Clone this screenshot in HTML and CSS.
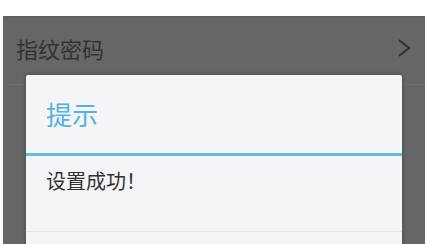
FILE: index.html
```html
<!DOCTYPE html>
<html lang="zh-CN">
<head>
    <meta charset="UTF-8">
    <meta name="viewport" content="width=device-width, initial-scale=1.0">
    <title>指纹密码</title>
    <link rel="stylesheet" href="styles.css">
</head>
<body>
    <div class="screen">
        <div class="list-row">
            <span class="row-label">指纹密码</span>
            <svg class="chevron" width="14" height="18" viewBox="0 0 14 18">
                <polyline points="2,1 12,9 2,17" fill="none" stroke="#333" stroke-width="2.2"/>
            </svg>
        </div>
        <div class="dialog">
            <div class="dialog-title">提示</div>
            <div class="dialog-body">设置成功！</div>
            <div class="dialog-buttons"></div>
        </div>
    </div>
</body>
</html>
```

FILE: styles.css
```css
body {
    margin: 0;
    padding: 0;
    background: #fff;
    font-family: 'Noto Sans CJK SC', 'Noto Sans', sans-serif;
    overflow: hidden;
}
.screen {
    position: relative;
    margin-top: 16px;
    margin-left: 3px;
    height: 228px;
    background: #666;
    border-top: 2px solid #616161;
    box-sizing: border-box;
}
.list-row {
    display: flex;
    align-items: center;
    justify-content: space-between;
    height: 60px;
    padding: 0 14px 6px 13px;
    border-bottom: 1px solid #6c6c6c;
}
.row-label {
    font-size: 22px;
    color: #333;
}
.chevron {
    display: block;
}
.dialog {
    position: absolute;
    left: 23px;
    top: 57px;
    width: 376px;
    height: 180px;
    background: #f5f5f7;
    border-radius: 2px;
    box-shadow: 0 0 4px rgba(0, 0, 0, 0.35);
}
.dialog-title {
    height: 77px;
    display: flex;
    align-items: center;
    padding: 0 0 1px 20px;
    font-size: 26px;
    color: #52b4dc;
    border-bottom: 3px solid #5dbde6;
}
.dialog-body {
    height: 76px;
    padding: 10px 0 0 20px;
    box-sizing: border-box;
    font-size: 20px;
    color: #333;
    border-bottom: 1px solid #e6e6e8;
}
```
